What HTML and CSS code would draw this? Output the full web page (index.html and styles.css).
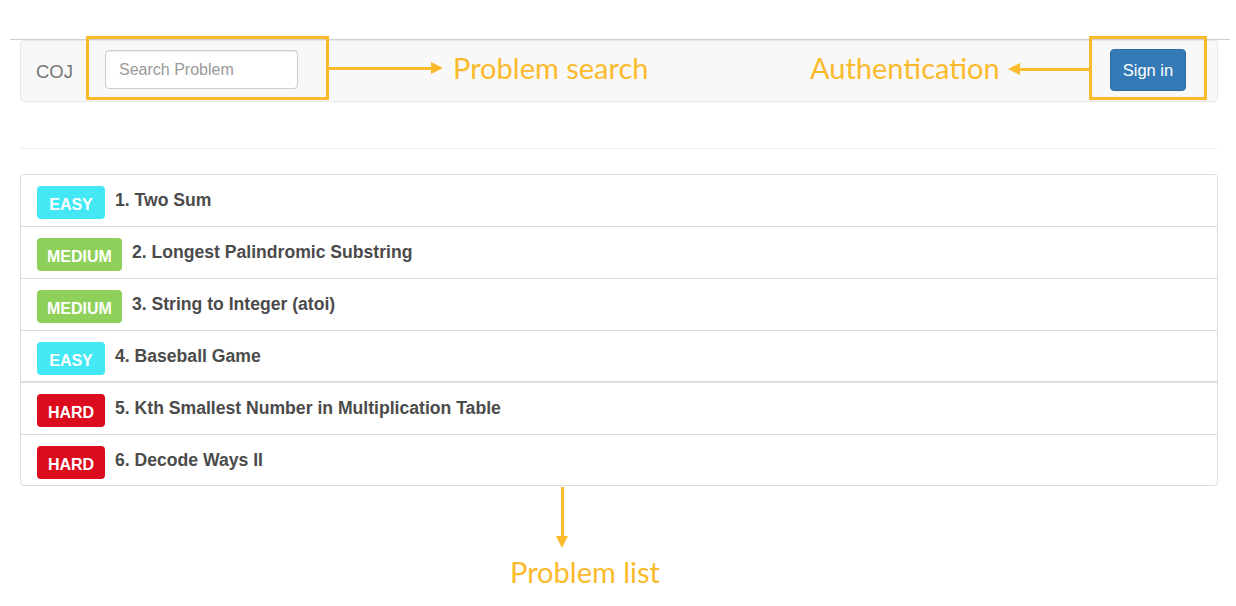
FILE: index.html
```html
<!DOCTYPE html>
<html lang="en">
<head>
<meta charset="utf-8">
<title>COJ</title>
<link rel="stylesheet" href="styles.css">
</head>
<body>
<div class="stage">
  <div class="top-rule"></div>
  <div class="container">
    <nav class="navbar">
      <span class="brand">COJ</span>
      <input class="search" type="text" placeholder="Search Problem">
      <span class="spacer"></span>
      <button class="btn-primary" type="button">Sign in</button>
    </nav>
    <hr class="divider">
    <ul class="list-group">
      <li class="item"><span class="label easy">EASY</span><span class="title">1. Two Sum</span></li>
      <li class="item"><span class="label medium">MEDIUM</span><span class="title">2. Longest Palindromic Substring</span></li>
      <li class="item"><span class="label medium">MEDIUM</span><span class="title">3. String to Integer (atoi)</span></li>
      <li class="item short"><span class="label easy">EASY</span><span class="title">4. Baseball Game</span></li>
      <li class="item split"><span class="label hard">HARD</span><span class="title">5. Kth Smallest Number in Multiplication Table</span></li>
      <li class="item"><span class="label hard">HARD</span><span class="title">6. Decode Ways II</span></li>
    </ul>
  </div>

  <div class="note-box box-search"></div>
  <div class="note-box box-auth"></div>

  <div class="arrow-h arrow-search"><span class="head-right"></span></div>
  <div class="arrow-h arrow-auth"><span class="head-left"></span></div>
  <div class="arrow-v arrow-list"><span class="head-down"></span></div>

  <div class="note note-search">Problem search</div>
  <div class="note note-auth">Authentication</div>
  <div class="note note-list">Problem list</div>
</div>
</body>
</html>
```

FILE: styles.css
```css
* { box-sizing: border-box; }

html, body {
  margin: 0;
  padding: 0;
  background: #ffffff;
}

body {
  font-family: "Liberation Sans", Arial, Helvetica, sans-serif;
  color: #333;
}

.stage {
  position: relative;
  width: 1236px;
  height: 606px;
  overflow: hidden;
}

.top-rule {
  height: 1px;
  margin: 39px 6px 0 10px;
  background: #cfcfcf;
}

.container {
  margin: 0 18px 0 20px;
}

.navbar {
  display: flex;
  align-items: center;
  height: 62px;
  padding: 0 31px 0 15px;
  background: #f8f8f8;
  border: 1px solid #e7e7e7;
  border-radius: 4px;
}

.brand {
  font-size: 18.5px;
  color: #777;
  margin-right: 32px;
  margin-top: 1px;
}

.search {
  width: 193px;
  height: 39px;
  margin-top: -3px;
  padding: 0 13px;
  font-family: "Liberation Sans", Arial, sans-serif;
  font-size: 16px;
  color: #555;
  background: #fff;
  border: 1px solid #ccc;
  border-radius: 4px;
  box-shadow: inset 0 1px 1px rgba(0,0,0,0.075);
  outline: none;
}

.search::placeholder { color: #999; }

.spacer { flex: 1; }

.btn-primary {
  height: 42px;
  width: 76px;
  margin-top: -2px;
  padding: 0;
  font-family: "Liberation Sans", Arial, sans-serif;
  font-size: 16.5px;
  color: #fff;
  background: #337ab7;
  border: 1px solid #2e6da4;
  border-radius: 4px;
}

.divider {
  margin: 46px 0 0 0;
  border: 0;
  border-top: 1px solid #eeeeee;
  height: 0;
}

.list-group {
  list-style: none;
  margin: 25px 0 0 0;
  padding: 0;
  border: 1px solid #dddddd;
  border-radius: 4px;
}

.item {
  display: flex;
  align-items: flex-start;
  gap: 10px;
  height: 52px;
  padding: 11px 16px 0 16px;
  border-top: 1px solid #dddddd;
}

.item:first-child {
  border-top: 0;
  height: 51px;
}

.item.short { height: 51px; }

.item.split {
  border-top: 2px solid #dddddd;
  height: 53px;
  padding-top: 11px;
}

.item:last-child { height: 51px; }

.label {
  display: inline-block;
  min-width: 68px;
  height: 33px;
  padding: 0 10px;
  line-height: 38px;
  text-align: center;
  font-size: 16px;
  font-weight: bold;
  color: #fff;
  border-radius: 4px;
}

.label.easy { background: #43e8f4; }
.label.medium { background: #8fd05a; }
.label.hard { background: #dc0c1f; }

.title {
  margin-top: 2px;
  line-height: 24px;
  font-size: 17.6px;
  font-weight: bold;
  color: #4b4b4b;
}

/* Annotation overlay */
.note-box {
  position: absolute;
  border: 3px solid #fbba2b;
}

.box-search {
  left: 86px;
  top: 36px;
  width: 243px;
  height: 64px;
}

.box-auth {
  left: 1089px;
  top: 36px;
  width: 118px;
  height: 64px;
}

.arrow-h {
  position: absolute;
  height: 3px;
  background: #fbba2b;
}

.arrow-search {
  left: 329px;
  top: 67px;
  width: 103px;
}

.arrow-auth {
  left: 1020px;
  top: 68px;
  width: 70px;
}

.head-right, .head-left, .head-down {
  position: absolute;
  width: 0;
  height: 0;
  border-style: solid;
}

.head-right {
  right: -11px;
  top: -5px;
  border-width: 6.5px 0 6.5px 12px;
  border-color: transparent transparent transparent #fbba2b;
}

.head-left {
  left: -12px;
  top: -5px;
  border-width: 6.5px 12px 6.5px 0;
  border-color: transparent #fbba2b transparent transparent;
}

.arrow-v {
  position: absolute;
  left: 561px;
  top: 487px;
  width: 3px;
  height: 49px;
  background: #fbba2b;
}

.head-down {
  left: -5px;
  bottom: -12px;
  border-width: 12px 6.5px 0 6.5px;
  border-color: #fbba2b transparent transparent transparent;
}

.note {
  position: absolute;
  font-family: Lato, "Open Sans", sans-serif;
  font-size: 29px;
  line-height: 29px;
  color: #fbba2b;
  white-space: nowrap;
}

.note-search { left: 453px; top: 53px; }
.note-auth { left: 810px; top: 53px; }
.note-list { left: 510px; top: 557px; }
```
